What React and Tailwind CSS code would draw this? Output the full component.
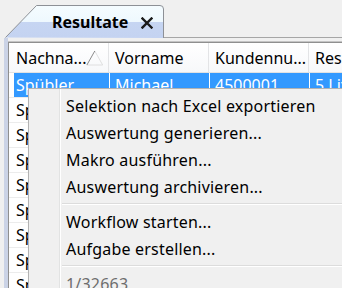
const columns = ["Nachna...", "Vorname", "Kundennu...", "Resultat"];

const rows = [
  ["Spübler", "Michael", "4500001", "5 Liter"],
  ["Spübler", "Anna", "4500002", "3 Liter"],
  ["Spengler", "Tobias", "4500003", "2 Liter"],
  ["Spiess", "Carla", "4500004", "5 Liter"],
  ["Sprenger", "Jonas", "4500005", "1 Liter"],
  ["Spahn", "Martin", "4500006", "4 Liter"],
  ["Spitz", "Laura", "4500007", "2 Liter"],
  ["Spörri", "Beat", "4500008", "6 Liter"],
  ["Sprecher", "Urs", "4500009", "3 Liter"],
];

function Tab() {
  return (
    <div className="relative shrink-0 ml-[5px] mt-[5px] w-[159px] h-[33px]">
      <svg className="absolute inset-0" width="159" height="33" viewBox="0 0 159 33">
        <defs>
          <linearGradient id="tabfill" x1="0" y1="0" x2="0" y2="1">
            <stop offset="0" stopColor="#f5fcff" />
            <stop offset="0.52" stopColor="#eef8fe" />
            <stop offset="0.52" stopColor="#c6d5f2" />
            <stop offset="1" stopColor="#c4d3f1" />
          </linearGradient>
        </defs>
        <path
          d="M0.5 32.5 L31.5 0.5 L155 0.5 Q158.5 0.5 158.5 4 L158.5 33"
          fill="url(#tabfill)"
          stroke="#8d9096"
          strokeWidth="1"
        />
      </svg>
      <div className="relative flex items-center h-[33px] pl-[47px] pt-[1px]">
        <span className="text-[16px] font-bold text-black leading-none">Resultate</span>
        <svg className="ml-[13px] mt-[1px]" width="12" height="12" viewBox="0 0 12 12">
          <path d="M1.5 1.5 L10.5 10.5 M10.5 1.5 L1.5 10.5" stroke="#1a1a1a" strokeWidth="2.4" strokeLinecap="square" />
        </svg>
      </div>
    </div>
  );
}

function SortArrow() {
  return (
    <svg width="20" height="18" viewBox="0 0 20 18" className="ml-auto mr-[4px]">
      <path d="M10 1 L19 17 L1 17" fill="none" stroke="#dcdcdc" strokeWidth="1" />
      <path d="M1 17 L10 1" fill="none" stroke="#7a7a7a" strokeWidth="1" />
    </svg>
  );
}

function Menu() {
  const item = "h-[27px] flex items-center pl-[37px] text-[16px] text-black tracking-[0.2px]";
  const sep = (
    <div className="h-[8px] flex items-center ml-[33px]">
      <div className="w-full border-t border-[#dcdcdc] border-b border-b-white" />
    </div>
  );
  return (
    <div className="absolute left-[28px] top-[88px] w-[330px] h-[230px] bg-[#f0f0f0] border border-[#b3b3b3] shadow-[1px_1px_2px_rgba(0,0,0,0.15)]">
      <div className="absolute left-[30px] top-0 bottom-0 w-[2px] border-l border-[#e2e3e3] border-r border-r-white" />
      <div className="relative pt-[3px]">
        <div className={item}>Selektion nach Excel exportieren</div>
        <div className={item}>Auswertung generieren...</div>
        <div className={item}>Makro ausführen...</div>
        <div className={item}>Auswertung archivieren...</div>
        {sep}
        <div className={item}>Workflow starten...</div>
        <div className={item}>Aufgabe erstellen...</div>
        {sep}
        <div className={item + " !text-[#6d6d6d]"}>1/32663</div>
      </div>
    </div>
  );
}

export default function App() {
  return (
    <div
      className="relative w-[342px] h-[288px] overflow-hidden bg-[#f0f0f0] text-black"
      style={{ fontFamily: '"Noto Sans", "Open Sans", sans-serif' }}
    >
      <div className="flex h-[38px]">
        <Tab />
        <div className="flex-1 min-w-0 self-end h-[1px] bg-[#a6a6a6]" />
      </div>
      <div className="flex h-[250px]">
        <div className="w-[4px] shrink-0 bg-[#f0f0f0]" />
        <div className="w-[4px] shrink-0 bg-[#cbd3e6]" />
        <div className="flex-1 min-w-0 flex flex-col">
          <div className="h-[3px] bg-[#f0f0f0]" />
          <div className="h-[1px] bg-[#c4c4c4]" />
          <div className="flex-1 min-w-0 bg-white border-l border-t border-[#8f8f8f] overflow-hidden">
            <div className="flex h-[30px] border-b border-[#e2e2e2] bg-gradient-to-b from-white to-[#f7f8fa] whitespace-nowrap">
              {columns.map((c, i) => (
                <div
                  key={c}
                  className={
                    "flex items-center shrink-0 w-[100px] border-r border-[#e3e4e6] text-[16px] " +
                    (i === 0 ? "pl-[7px]" : "pl-[6px]")
                  }
                >
                  <span>{c}</span>
                  {i === 0 && <SortArrow />}
                </div>
              ))}
            </div>
            {rows.map((r, ri) => (
              <div key={ri} className="flex h-[25px] pl-[5px] border-b border-[#ececec] whitespace-nowrap">
                {r.map((v, ci) => (
                  <div
                    key={ci}
                    className={
                      "flex items-center shrink-0 text-[16px] border-r " +
                      (ci === 0 ? "w-[96px] pl-[2px] " : "w-[100px] pl-[5px] ") +
                      (ri === 0 ? "bg-[#3399ff] text-white border-white" : "border-[#f0f0f0]")
                    }
                  >
                    {v}
                  </div>
                ))}
              </div>
            ))}
          </div>
        </div>
      </div>
      <Menu />
    </div>
  );
}
